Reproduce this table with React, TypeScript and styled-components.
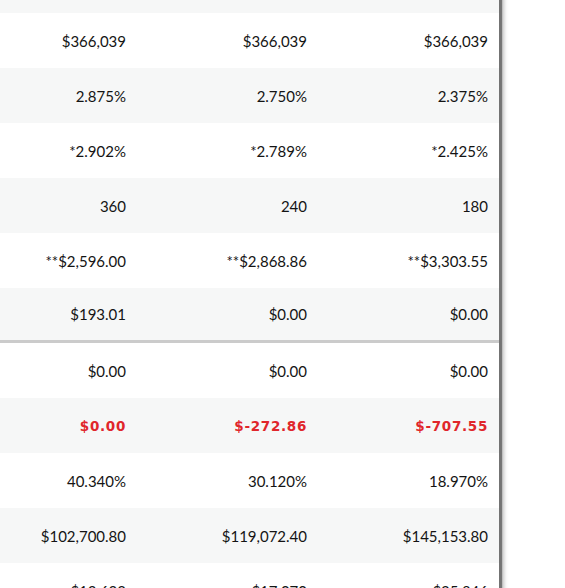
import React from 'react';
import styled, { createGlobalStyle } from 'styled-components';

const Global = createGlobalStyle`
  html, body { margin: 0; padding: 0; background: #fff; }
  body { font-family: Lato, "Open Sans", sans-serif; }
`;

const Page = styled.div`
  width: 565px;
  height: 588px;
  overflow: hidden;
  background: #fff;
`;

const Panel = styled.div`
  width: 499px;
  margin-top: -42px;
  background: #fff;
  box-shadow: 2px 0 1px 1px rgba(0, 0, 0, 0.4), 4px 0 4px 1px rgba(0, 0, 0, 0.25);
`;

const Row = styled.div<{ $shade: boolean; $divider?: boolean }>`
  display: grid;
  grid-template-columns: 137px 181px 181px;
  align-items: center;
  height: ${(p) => (p.$divider ? '52px' : '55px')};
  background: ${(p) => (p.$shade ? '#f6f7f7' : '#ffffff')};
  border-bottom: ${(p) => (p.$divider ? '3px solid #cbcbcb' : 'none')};
`;

const Cell = styled.div<{ $negative?: boolean }>`
  text-align: right;
  padding-right: 11px;
  white-space: nowrap;
  font-family: ${(p) => (p.$negative ? '"DejaVu Sans", Verdana, sans-serif' : 'Lato, "Open Sans", sans-serif')};
  font-size: ${(p) => (p.$negative ? '13.5px' : '15px')};
  font-weight: ${(p) => (p.$negative ? 700 : 400)};
  letter-spacing: ${(p) => (p.$negative ? '0.7px' : '0')};
  color: ${(p) => (p.$negative ? '#e0262b' : '#141414')};
`;

type RowData = { values: string[]; negative?: boolean; divider?: boolean };

const rows: RowData[] = [
  { values: ['', '', ''] },
  { values: ['$366,039', '$366,039', '$366,039'] },
  { values: ['2.875%', '2.750%', '2.375%'] },
  { values: ['*2.902%', '*2.789%', '*2.425%'] },
  { values: ['360', '240', '180'] },
  { values: ['**$2,596.00', '**$2,868.86', '**$3,303.55'] },
  { values: ['$193.01', '$0.00', '$0.00'], divider: true },
  { values: ['$0.00', '$0.00', '$0.00'] },
  { values: ['$0.00', '$-272.86', '$-707.55'], negative: true },
  { values: ['40.340%', '30.120%', '18.970%'] },
  { values: ['$102,700.80', '$119,072.40', '$145,153.80'] },
  { values: ['$13,622', '$17,070', '$25,846'] },
];

export default function App() {
  return (
    <Page>
      <Global />
      <Panel>
        {rows.map((r, i) => (
          <Row key={i} $shade={i % 2 === 0} $divider={r.divider}>
            {r.values.map((v, j) => (
              <Cell key={j} $negative={r.negative}>
                {v}
              </Cell>
            ))}
          </Row>
        ))}
      </Panel>
    </Page>
  );
}
